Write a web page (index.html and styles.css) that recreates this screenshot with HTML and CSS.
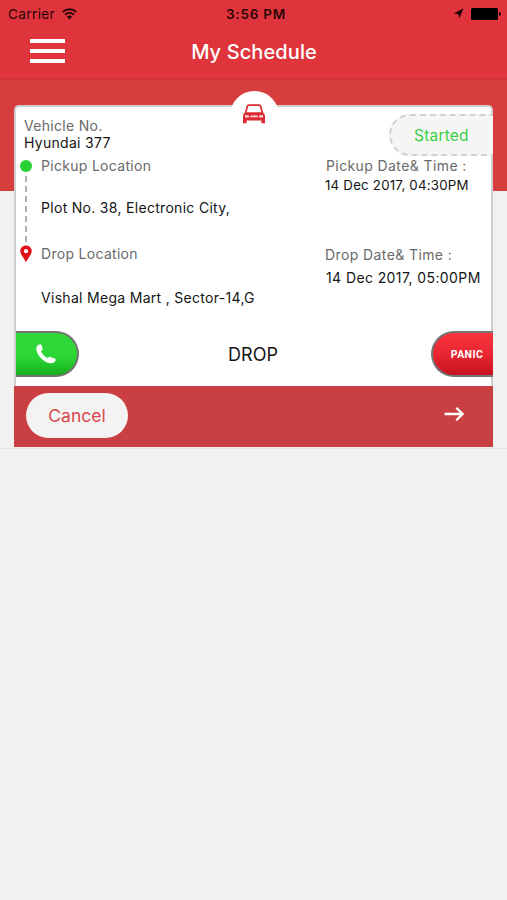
FILE: index.html
```html
<!DOCTYPE html>
<html lang="en">
<head>
    <meta charset="UTF-8">
    <meta name="viewport" content="width=device-width, initial-scale=1.0">
    <title>My Schedule</title>
    <link rel="stylesheet" href="styles.css">
</head>
<body>
    <header class="header">
        <div class="status-bar">
            <div class="carrier">
                <span>Carrier</span>
                <svg width="15" height="12" viewBox="0 0 15 12">
                    <path d="M0.800 4a9.600 9.600 0 0 1 13.400 0M3.100 6.700a6.300 6.300 0 0 1 8.800 0" fill="none" stroke="#2a0508" stroke-width="1.900"/>
                    <path d="M4.900 8.600a3.800 3.800 0 0 1 5.200 0L7.500 11.400z" fill="#2a0508"/>
                </svg>
            </div>
            <div class="clock">3:56 PM</div>
            <div class="battery">
                <svg width="11" height="11" viewBox="0 0 11 11">
                    <path d="M10.500 0.500L0.500 5.400L5.300 5.900L6.200 10.500z" fill="#1a0000"/>
                </svg>
                <svg width="30" height="12" viewBox="0 0 30 12">
                    <rect x="0" y="0" width="27" height="12" rx="1.500" fill="#000"/>
                    <path d="M28 4q2 0.500 2 2t-2 2z" fill="#000"/>
                </svg>
            </div>
        </div>
        <div class="nav">
            <button class="menu-btn" aria-label="Menu">
                <span></span>
                <span></span>
                <span></span>
            </button>
            <h1>My Schedule</h1>
        </div>
    </header>

    <main class="schedule">
        <div class="card">
            <div class="car-badge">
                <svg width="24" height="20" viewBox="0 0 24 20">
                    <path d="M3.600 9L5.400 2.300Q5.700 1.200 6.800 1.200h10.400Q18.300 1.200 18.600 2.300L20.400 9" fill="none" stroke="#dd2b35" stroke-width="1.700"/>
                    <path d="M3.200 8.300h17.600q2.200 1.200 2.200 3.900v7h-3.600v-2.700H4.600v2.700H1v-7q0-2.700 2.200-3.900z" fill="#dd2b35"/>
                    <path d="M3 11l4 0.500v1.900H3zM21 11l-4 0.500v1.900h4zM8.300 11.600h7.400v1.700H8.300z" fill="#fbd5d8"/>
                </svg>
            </div>
            <div class="status">Started</div>

            <div class="vehicle">
                <p class="label">Vehicle No.</p>
                <p class="value">Hyundai 377</p>
            </div>

            <div class="stop pickup">
                <div class="marker">
                    <span class="dot"></span>
                    <span class="route"></span>
                </div>
                <div class="place">
                    <p class="label">Pickup Location</p>
                    <p class="value">Plot No. 38, Electronic City,</p>
                </div>
                <div class="time">
                    <p class="label">Pickup Date&amp; Time :</p>
                    <p class="value">14 Dec 2017, 04:30PM</p>
                </div>
            </div>

            <div class="stop drop">
                <div class="marker">
                    <svg width="12" height="18" viewBox="0 0 12 18">
                        <path d="M6 0.500C2.700 0.500 0.300 2.900 0.300 6c0 3.700 3.400 6.600 5.700 11.300C8.300 12.600 11.700 9.700 11.700 6c0-3.100-2.400-5.500-5.700-5.500z" fill="#e01019"/>
                        <circle cx="6" cy="6.200" r="2.100" fill="#fff"/>
                    </svg>
                </div>
                <div class="place">
                    <p class="label">Drop Location</p>
                    <p class="value">Vishal Mega Mart , Sector-14,G</p>
                </div>
                <div class="time">
                    <p class="label">Drop Date&amp; Time :</p>
                    <p class="value">14 Dec 2017, 05:00PM</p>
                </div>
            </div>

            <div class="actions">
                <button class="call-btn" aria-label="Call">
                    <svg width="20" height="20" viewBox="0 0 20 20">
                        <path d="M1 2Q2.500 0.200 4.300 0.300Q5.400 0.600 5.900 2L6.600 4.400Q7 6 5.400 6.800Q5 7.200 5.300 8Q7 11.700 10.700 13.700Q11.500 14.100 12 13.600Q13 12.500 14.200 13L18.800 14.500Q20.300 15.200 19.500 16.700Q17.800 19.600 14.300 19.300Q9.500 18.700 4.800 13.900Q-1.500 6.800 1 2z" fill="#fff"/>
                    </svg>
                </button>
                <span class="trip-type">DROP</span>
                <button class="panic-btn"><span>PANIC</span></button>
            </div>
        </div>
        <div class="card-footer">
            <button class="cancel-btn">Cancel</button>
            <svg width="20" height="16" viewBox="0 0 20 16">
                <path d="M0.500 8H18M12.300 1.800L18.500 8L12.300 14.200" fill="none" stroke="#fff" stroke-width="2.300"/>
            </svg>
        </div>
    </main>
</body>
</html>
```
FILE: styles.css
```css
* {
    box-sizing: border-box;
}
body {
    font-family: Inter, "Liberation Sans", sans-serif;
    margin: 0;
    height: 900px;
    background-color: #f1f1f1;
    color: #151515;
}
h1, p {
    margin: 0;
}
button {
    font-family: inherit;
    border: none;
    padding: 0;
}
svg {
    display: block;
}
.header {
    height: 80px;
    background-color: #df343c;
    border-bottom: 1px solid #c8343a;
}
.status-bar {
    display: grid;
    grid-template-columns: 1fr auto 1fr;
    align-items: center;
    height: 27px;
    padding: 0 6px 0 8px;
    font-size: 13.5px;
    color: #2a0508;
}
.carrier {
    display: flex;
    align-items: center;
    gap: 7px;
    letter-spacing: 0.4px;
}
.clock {
    font-weight: 600;
    letter-spacing: 0.8px;
    margin-left: 3px;
}
.battery {
    display: flex;
    align-items: center;
    justify-content: flex-end;
    gap: 7px;
}
.nav {
    display: grid;
    grid-template-columns: 65px 1fr 64px;
    align-items: center;
    height: 47px;
}
.menu-btn {
    display: flex;
    flex-direction: column;
    gap: 6px;
    width: 35px;
    margin-left: 30px;
    background: none;
}
.menu-btn span {
    height: 4px;
    background-color: #fff;
}
.nav h1 {
    padding-top: 2px;
    text-align: center;
    font-size: 20px;
    font-weight: 500;
    line-height: 24px;
    letter-spacing: 0.1px;
    color: #fff;
}
.schedule {
    height: 369px;
    padding: 25px 14px 0;
    background: linear-gradient(#d63d3d 111px, #f1f1f1 111px);
    border-bottom: 1px solid #e4e4e4;
}
.card {
    position: relative;
    height: 281px;
    background-color: #fff;
    border: 2px solid #cecece;
    border-bottom: none;
    border-radius: 5px 5px 0 0;
}
.car-badge {
    position: absolute;
    top: -16px;
    left: 214px;
    width: 49px;
    height: 49px;
    padding: 13px 0 0 12px;
    border-radius: 50%;
    background-color: #fff;
}
.status {
    position: absolute;
    top: 7px;
    right: -2px;
    width: 104px;
    height: 42px;
    padding-left: 23px;
    border: 2px dashed #d2d2d2;
    border-right: none;
    border-radius: 21px 0 0 21px;
    background-color: #f5f5f5;
    font-size: 15.5px;
    line-height: 39px;
    letter-spacing: 0.2px;
    color: #3bd046;
}
.label {
    font-size: 14px;
    line-height: 18px;
    letter-spacing: 0.3px;
    color: #6a6a6a;
}
.value {
    font-size: 14px;
    line-height: 18px;
    letter-spacing: 0.3px;
}
.vehicle {
    height: 50px;
    padding: 10px 0 0 8px;
}
.vehicle .value {
    margin-top: -1px;
}
.stop {
    display: grid;
    grid-template-columns: 25px 284px 1fr;
    height: 88px;
}
.marker {
    display: flex;
    flex-direction: column;
    align-items: center;
    width: 20px;
}
.dot {
    width: 12px;
    height: 12px;
    margin-top: 3px;
    border-radius: 50%;
    background-color: #29d137;
}
.route {
    width: 2px;
    height: 68px;
    margin-top: 4px;
    background: repeating-linear-gradient(#b0b0b0 0 6px, transparent 6px 10px);
}
.place .value {
    margin-top: 24px;
}
.time .label {
    padding-left: 1px;
    letter-spacing: 0.4px;
}
.drop {
    height: 79px;
}
.drop .place .value {
    margin-top: 26px;
}
.pickup .time .value {
    margin-top: 1px;
    font-size: 13.3px;
    letter-spacing: 0.2px;
}
.drop .time .label {
    padding: 1px 0 0;
}
.drop .time .value {
    margin-top: 5px;
    padding-left: 1px;
    letter-spacing: 0.4px;
}
.actions {
    display: grid;
    grid-template-columns: 63px 1fr 62px;
    align-items: center;
    height: 60px;
    margin-right: -2px;
}
.call-btn, .panic-btn {
    height: 46px;
    border: 2px solid #747474;
    color: #fff;
}
.call-btn {
    border-left: none;
    border-radius: 0 23px 23px 0;
    padding-left: 20px;
    background: linear-gradient(#32d83a 0%, #2bd634 60%, #16ae1f 100%);
}
.panic-btn {
    border-right: none;
    border-radius: 23px 0 0 23px;
    padding: 1px 0 0 8px;
    background: linear-gradient(#fb343f, #e62530 55%, #c4121e);
    font-family: Roboto, "Liberation Sans", sans-serif;
    font-size: 10.5px;
    font-weight: 700;
    letter-spacing: 0.4px;
}
.trip-type {
    padding-right: 4px;
    text-align: center;
    font-size: 18px;
}
.card-footer {
    display: flex;
    align-items: flex-start;
    justify-content: space-between;
    height: 61px;
    padding: 7px 29px 0 12px;
    background-color: #ca4042;
}
.card-footer svg {
    margin-top: 13px;
}
.cancel-btn {
    width: 102px;
    height: 45px;
    border-radius: 23px;
    background-color: #f3f3f3;
    font-size: 17.5px;
    color: #dc474c;
}
```
